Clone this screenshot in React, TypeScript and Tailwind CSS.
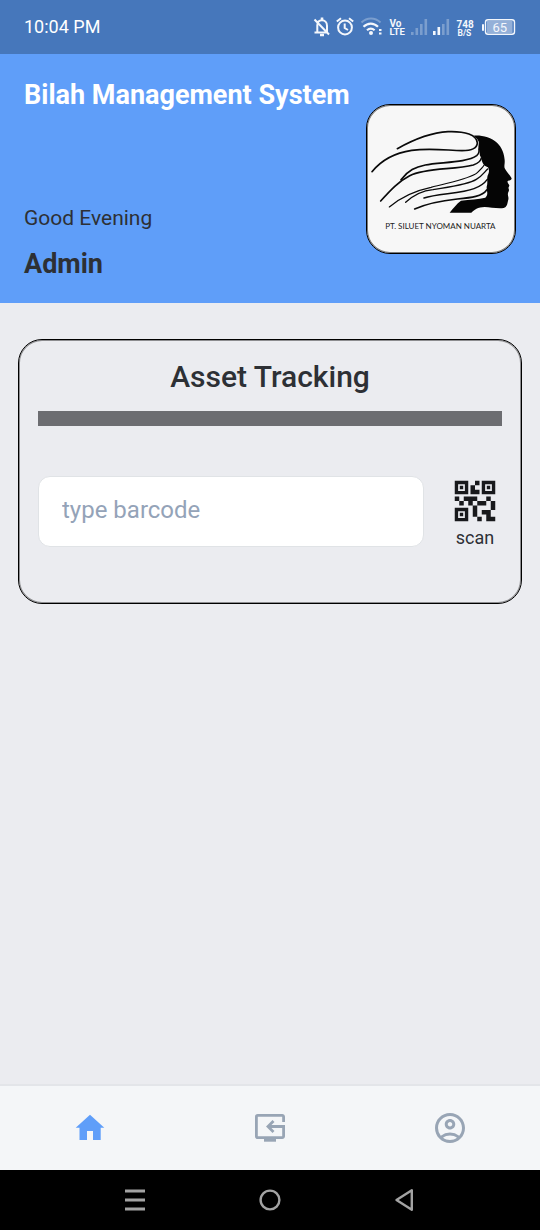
import { MdOutlineAccountCircle, MdQrCode2 } from "react-icons/md";

function StatusIcons() {
  return (
    <svg
      viewBox="312 12 206 30"
      className="h-[30px] w-[206px]"
      fill="none"
      stroke="#f4f7fc"
      strokeWidth="2"
      role="img"
      aria-label="Device status"
    >
      {/* muted bell */}
      <path d="M317.300 32.500V25.500c0-3.500 2-5.200 4.700-5.200s5 2 5 5.500v6M314.500 32.500h12M314.500 19.500l14.500 15" />
      <path d="M320 35h4M322 17.500v3" strokeWidth="2.600" />
      {/* alarm */}
      <circle cx="345" cy="27.500" r="6.900" />
      <path d="M344.700 23.500v4.500l3.300 2M336.800 21.500l4.200-3.300M353.200 21.500l-4.200-3.300" />
      {/* wifi */}
      <path d="M361.500 22.500c5.500-5.300 13.500-5.300 19 0" opacity="0.3" />
      <path d="M363.500 26.800c4.300-4.300 10.200-4.300 14.500 0M367 30.300c2.400-2.200 5.200-2.200 7.600 0" strokeWidth="2.200" />
      <circle cx="371" cy="33" r="2" fill="#f4f7fc" stroke="none" />
      <path d="M379 30h2.500M379 33.500h2.500" strokeWidth="1.800" />
      {/* signal bars */}
      <g stroke="none" fill="#f4f7fc">
        <g opacity="0.3">
          <rect x="411" y="32" width="2.600" height="3" />
          <rect x="415.500" y="28" width="2.600" height="7" />
          <rect x="420" y="24" width="2.600" height="11" />
          <rect x="424.500" y="19" width="2.600" height="16" />
          <rect x="442" y="24" width="2.600" height="11" />
          <rect x="446.500" y="19" width="2.600" height="16" />
        </g>
        <rect x="433" y="31" width="2.600" height="4" />
        <rect x="437.500" y="27" width="2.600" height="8" />
        <g fontFamily="Roboto, sans-serif" fontWeight="700">
          <text x="389.500" y="26.500" fontSize="10">Vo</text>
          <text x="389.500" y="35.300" fontSize="9.500">LTE</text>
          <text x="456.500" y="27.500" fontSize="10">748</text>
          <text x="457.500" y="36" fontSize="8.500">B/S</text>
        </g>
        {/* battery */}
        <rect x="487" y="21" width="25.500" height="12" opacity="0.45" />
        <rect x="482" y="24" width="2" height="7" rx="1" />
        <text x="492.500" y="31.700" fontSize="13" fontFamily="Roboto, sans-serif">65</text>
      </g>
      <rect x="485.500" y="19.700" width="29" height="14.600" rx="2.500" strokeWidth="1.400" />
    </svg>
  );
}

function CompanyLogo() {
  return (
    <svg viewBox="21 19 444 444" className="block h-full w-full" role="img" aria-label="PT. Siluet Nyoman Nuarta">
      <path
        fill="#050505"
        d="M341 111C365 109 393 116 411 132C427 147 433 167 434 184C435 197 431 204 435 210C440 219 451 231 455 239C455 244 450 245 443 247C441 252 447 256 448 260C448 265 444 266 446 270C449 276 444 279 444 284C442 290 448 296 444 306C442 315 441 325 431 328C413 330 390 326 374 325C354 325 342 334 334 342L269 342C279 330 290 315 303 306C329 302 356 302 376 297C387 287 379 276 380 264C385 250 378 239 385 226C389 217 386 211 384 206C369 201 366 190 364 178C357 169 360 164 359 155C350 147 360 134 355 127C352 119 346 115 341 111Z"
      />
      <g fill="none" stroke="#0a0a0a" strokeLinecap="round">
        <path strokeWidth="5" d="M112 150C155 126 205 102 264 99C315 97 351 109 352 133C351 151 332 156 306 156C260 155 211 148 155 155C101 163 62 187 36 219" />
        <path strokeWidth="5" d="M123 243C145 215 166 205 196 199C238 190 321 193 350 171C359 163 358 157 357 151" />
        <path strokeWidth="5" d="M62 307C91 275 117 247 149 231C199 207 281 214 340 199C356 193 363 186 364 178" />
        <path strokeWidth="3.500" d="M88 325C122 296 165 276 213 266C267 251 331 241 352 222C364 211 369 206 372 200" />
        <path strokeWidth="4" d="M137 311C161 289 186 276 219 273C266 265 324 258 349 242C368 231 373 220 383 211" />
        <path strokeWidth="4.500" d="M192 298C232 285 304 285 342 270C366 261 374 253 382 242" />
        <path strokeWidth="5" d="M164 331C200 315 245 306 292 301C335 297 367 293 380 274" />
      </g>
      <text
        x="241"
        y="391"
        textAnchor="middle"
        fontFamily="Lato, sans-serif"
        fontSize="24"
        fill="#222222"
      >
        PT. SILUET NYOMAN NUARTA
      </text>
    </svg>
  );
}

function HomeIcon() {
  return (
    <svg viewBox="0 0 36 36" className="size-9" fill="currentColor" aria-hidden="true">
      <path d="M18 4.700L32.300 17.800H28.700V30H21V21H15V30H7.500V17.800H3.700z" />
    </svg>
  );
}

function AssetsIcon() {
  return (
    <svg viewBox="0 0 36 36" className="size-9" fill="none" stroke="currentColor" strokeWidth="2.800" aria-hidden="true">
      <path d="M31.600 12V6.800a1.400 1.400 0 0 0-1.400-1.400H5.800a1.400 1.400 0 0 0-1.400 1.400v19.400a1.400 1.400 0 0 0 1.400 1.400h24.400a1.400 1.400 0 0 0 1.400-1.400V16.500H16" />
      <path d="M21.500 11L16 16.500l5.500 5.500" />
      <path d="M12 29.700h12" strokeWidth="4" />
    </svg>
  );
}

export default function App() {
  return (
    <div className="flex min-h-screen flex-col bg-[#ebecf0] font-[Roboto,sans-serif] text-[#2d3035]">
      <div className="flex h-[54px] items-center justify-between bg-[#4677bb] pr-[22px] pl-6 text-white">
        <time className="text-lg">10:04 PM</time>
        <StatusIcons />
      </div>

      <header className="flex items-center justify-between bg-[#5f9ef9] px-6">
        <div className="flex h-[249px] flex-col pt-[25px] pb-[23px]">
          <h1 className="text-[27px] leading-8 font-bold text-white">Bilah Management System</h1>
          <p className="mt-auto text-[21px] leading-7">Good Evening</p>
          <p className="mt-4 text-[27px] leading-8 font-bold">Admin</p>
        </div>
        <div className="h-[150px] w-[150px] shrink-0 overflow-hidden rounded-3xl border border-black bg-[#f7f7f7] shadow-[inset_0_0_0_1px_rgba(0,0,0,0.5)]">
          <CompanyLogo />
        </div>
      </header>

      <main className="flex-1 px-[18px] pt-9">
        <section className="rounded-3xl border border-black px-[19px] pt-[19px] pb-[53px] shadow-[inset_0_0_0_1px_rgba(0,0,0,0.4)]">
          <h2 className="text-center text-3xl leading-9 font-medium">Asset Tracking</h2>
          <div className="mt-4 h-[15px] bg-[#6c6d71]" />
          <div className="mt-12 flex items-start gap-6">
            <input
              type="text"
              aria-label="Barcode"
              placeholder="type barcode"
              className="mt-0.5 h-[71px] min-w-0 flex-1 rounded-xl border border-[#e0e3e6] bg-white px-[23px] pb-1 text-2xl outline-none placeholder:text-[#94a3b8]"
            />
            <button type="button" className="flex flex-col items-center">
              <MdQrCode2 className="-mb-0.5 size-[54px] text-[#18191c]" />
              <span className="text-lg leading-6">scan</span>
            </button>
          </div>
        </section>
      </main>

      <nav className="flex h-[86px] border-t-2 border-[#e3e5e9] bg-[#f4f6f8] text-[#98a5b5]">
        <a href="#home" aria-label="Home" className="flex flex-1 items-center justify-center text-[#5f9ef9]">
          <HomeIcon />
        </a>
        <a href="#assets" aria-label="Assets" className="flex flex-1 items-center justify-center">
          <AssetsIcon />
        </a>
        <a href="#account" aria-label="Account" className="flex flex-1 items-center justify-center">
          <MdOutlineAccountCircle className="size-9" />
        </a>
      </nav>

      <div className="grid h-[60px] grid-cols-3 bg-black px-[67px]">
        <button type="button" aria-label="Recent apps" className="flex items-center justify-center">
          <svg viewBox="0 0 24 24" className="size-6" stroke="#a3a3a3" strokeWidth="2.800">
            <path d="M2 3h20M2 12h20M2 21h20" />
          </svg>
        </button>
        <button type="button" aria-label="Home screen" className="flex items-center justify-center">
          <svg viewBox="0 0 24 24" className="size-6" fill="none" stroke="#a3a3a3" strokeWidth="2.400">
            <circle cx="12" cy="12" r="9.400" />
          </svg>
        </button>
        <button type="button" aria-label="Back" className="flex items-center justify-center">
          <svg viewBox="0 0 24 24" className="size-6" fill="none" stroke="#a3a3a3" strokeWidth="2.400" strokeLinejoin="round">
            <path d="M18.800 2.200v19.600L3.500 12z" />
          </svg>
        </button>
      </div>
    </div>
  );
}
